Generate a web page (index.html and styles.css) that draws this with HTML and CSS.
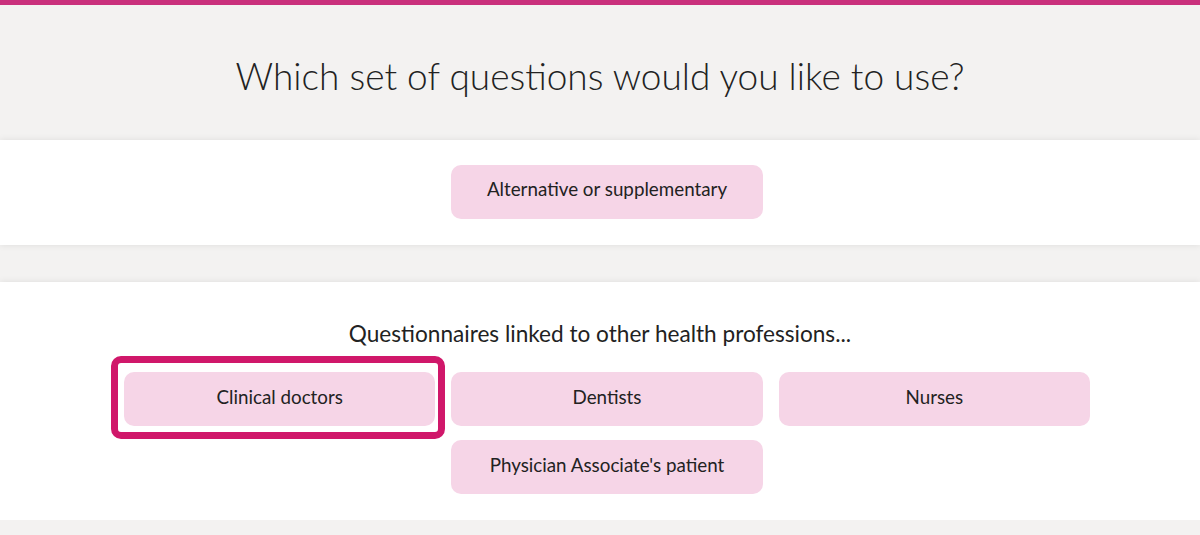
FILE: index.html
```html
<!DOCTYPE html>
<html>
<head>
    <meta charset="UTF-8">
    <meta name="viewport" content="width=device-width, initial-scale=1.0">
    <link rel="stylesheet" href="styles.css">
</head>
<body>
    <div class="page-header">
        <h1 class="title">Which set of questions would you like to use?</h1>
    </div>

    <div class="panel panel-first">
        <div class="choices">
            <button class="choice col-2">Alternative or supplementary</button>
        </div>
    </div>

    <div class="panel panel-second">
        <h2 class="subtitle">Questionnaires linked to other health professions...</h2>
        <div class="choices">
            <button class="choice focused">Clinical doctors</button>
            <button class="choice">Dentists</button>
            <button class="choice">Nurses</button>
            <button class="choice col-2">Physician Associate's patient</button>
        </div>
    </div>
</body>
</html>
```

FILE: styles.css
```css
body {
    margin: 0;
    background-color: #f3f2f1;
    font-family: Lato, "Open Sans", sans-serif;
    color: #222;
    border-top: 5px solid #c9307c;
}

.page-header {
    padding: 49px 0 41.6px;
    text-align: center;
}

.title {
    margin: 0;
    font-size: 37px;
    font-weight: 300;
    line-height: 1.2;
    color: #222;
}

.panel {
    background-color: #fff;
    box-shadow: 0 0 7px rgba(0, 0, 0, 0.09);
}

.panel-first {
    padding: 25px 0 26px;
    margin-bottom: 37px;
}

.panel-second {
    padding: 38px 0 26px;
}

.subtitle {
    margin: 0 0 25px;
    font-size: 22.6px;
    font-weight: 400;
    line-height: 1.2;
    text-align: center;
}

.choices {
    width: 966px;
    margin: 0 auto;
    padding-left: 14px;
    display: grid;
    grid-template-columns: repeat(3, 1fr);
    column-gap: 16px;
    row-gap: 14px;
}

.choice {
    position: relative;
    height: 54px;
    padding: 0 10px 6px;
    border: none;
    border-radius: 10px;
    background-color: #f6d5e7;
    color: #222;
    font-family: Lato, "Open Sans", sans-serif;
    font-size: 18.8px;
    cursor: pointer;
}

.col-2 {
    grid-column: 2;
}

.focused::after {
    content: "";
    position: absolute;
    top: -16px;
    left: -13px;
    right: -10px;
    bottom: -13px;
    border: 7px solid #d0176a;
    border-radius: 10px;
}
```
